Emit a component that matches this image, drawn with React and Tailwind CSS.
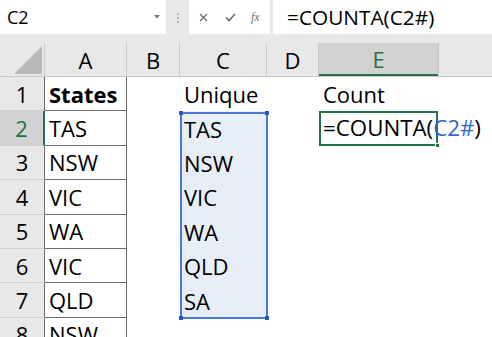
import React from "react";

const ROW_H = "h-[34.4px]";

function RowHeader({ n, active }) {
  return (
    <div
      className={
        "w-[45px] shrink-0 flex items-center justify-center border-b border-[#cfcfcf] " +
        (active
          ? "bg-[#d2d2d2] text-[#217346] border-r-2 border-r-[#217346]"
          : "bg-[#e8e8e8] text-black border-r border-r-[#6b6b6b]")
      }
    >
      {n}
    </div>
  );
}

const aVals = ["States", "TAS", "NSW", "VIC", "WA", "VIC", "QLD", "NSW"];
const cVals = ["Unique", "TAS", "NSW", "VIC", "WA", "QLD", "SA", ""];

export default function App() {
  return (
    <div
      className="relative w-[492px] h-[337px] overflow-hidden bg-white text-[22px] leading-none text-black"
      style={{ fontFamily: '"Open Sans", "Noto Sans", sans-serif' }}
    >
      {/* formula bar */}
      <div className="flex h-[35px] bg-[#e8e8e8]">
        <div className="w-[166px] h-[34px] bg-white flex items-center justify-between pl-[7px] pr-[6px]">
          <span className="text-[18px]">C2</span>
          <svg width="6" height="4" viewBox="0 0 6 4">
            <path d="M0 0 L6 0 L3 3.5 Z" fill="#777" />
          </svg>
        </div>
        <div className="w-[23px] flex flex-col items-center justify-center gap-[2px]">
          <div className="w-[2px] h-[2px] bg-[#b5b5b5]" />
          <div className="w-[2px] h-[2px] bg-[#b5b5b5]" />
          <div className="w-[2px] h-[2px] bg-[#b5b5b5]" />
        </div>
        <div className="w-[81px] h-[34px] bg-white flex items-center">
          <svg className="ml-[10px]" width="9" height="9" viewBox="0 0 9 9">
            <path d="M1 1 L8 8 M8 1 L1 8" stroke="#6d6d6d" strokeWidth="1.3" />
          </svg>
          <svg className="ml-[17px]" width="11" height="9" viewBox="0 0 11 9">
            <path d="M1 4.5 L4 7.5 L10 1" stroke="#6d6d6d" strokeWidth="1.6" fill="none" />
          </svg>
          <span
            className="ml-[15px] text-[12px] italic text-[#6d6d6d]"
            style={{ fontFamily: '"Liberation Serif", serif' }}
          >
            fx
          </span>
        </div>
        <div className="w-[3px]" />
        <div className="flex-1 h-[34px] bg-white flex items-center pl-[14px] text-[20.8px]">
          =COUNTA(C2#)
        </div>
      </div>
      <div className="h-[8px] bg-[#e8e8e8]" />

      {/* column headers */}
      <div className="flex h-[34px] bg-[#e8e8e8] border-b border-[#c8c8c8]">
        <div className="w-[45px] shrink-0 flex items-end justify-end pr-[2px] pb-[2px] border-r border-[#c8c8c8]">
          <svg width="28" height="28" viewBox="0 0 28 28">
            <path d="M28 0 L28 28 L0 28 Z" fill="#b8b8b8" />
          </svg>
        </div>
        <div className="w-[82px] shrink-0 flex items-center justify-center border-r border-[#c8c8c8]">A</div>
        <div className="w-[53px] shrink-0 flex items-center justify-center border-r border-[#c8c8c8]">B</div>
        <div className="w-[87px] shrink-0 flex items-center justify-center border-r border-[#c8c8c8]">C</div>
        <div className="w-[52px] shrink-0 flex items-center justify-center border-r border-[#c8c8c8]">D</div>
        <div className="w-[119px] shrink-0 flex items-center justify-center bg-[#d2d2d2] text-[#217346] border-b-2 border-[#217346]">E</div>
        <div className="flex-1 border-l border-[#c8c8c8]" />
      </div>

      {/* rows */}
      {aVals.map((a, i) => {
        const n = i + 1;
        const inSel = n >= 2 && n <= 7;
        return (
          <div key={n} className={"flex " + ROW_H}>
            <RowHeader n={n} active={n === 2} />
            <div
              className={
                "w-[82px] shrink-0 flex items-center pl-[4px] border-r border-b border-[#6b6b6b] " +
                (n === 1 ? "font-bold" : "")
              }
            >
              {a}
            </div>
            <div className="w-[53px] shrink-0" />
            <div
              className={
                "w-[87px] shrink-0 flex items-center pl-[4px] " + (inSel ? "bg-[#e8eef8]" : "")
              }
            >
              {cVals[i]}
            </div>
            <div className="w-[52px] shrink-0" />
            {n === 1 ? (
              <div className="w-[119px] shrink-0 flex items-center pl-[4px]">Count</div>
            ) : n === 2 ? (
              <div className="relative w-[119px] shrink-0 flex items-center pl-[2px] border-2 border-[#217346] whitespace-nowrap text-[22.3px]">
                <span>=COUNTA(</span>
                <span className="text-[#2f66cf]">C2#</span>
                <span>)</span>
                <span className="ml-[1px] w-[1px] h-[22px] bg-black" />
                <div className="absolute right-[-4px] bottom-[-4px] w-[5px] h-[5px] bg-[#217346] border border-white" />
              </div>
            ) : (
              <div className="w-[119px] shrink-0" />
            )}
            <div className="flex-1" />
          </div>
        );
      })}

      {/* spill range highlight */}
      <div className="absolute left-[180px] top-[112px] w-[88px] h-[207px] border-2 border-[#4a7bd8] pointer-events-none">
        <div className="absolute left-[-3px] top-[-3px] w-[4px] h-[4px] bg-[#2a58c0]" />
        <div className="absolute right-[-3px] top-[-3px] w-[4px] h-[4px] bg-[#2a58c0]" />
        <div className="absolute left-[-3px] bottom-[-3px] w-[4px] h-[4px] bg-[#2a58c0]" />
        <div className="absolute right-[-3px] bottom-[-3px] w-[4px] h-[4px] bg-[#2a58c0]" />
      </div>
    </div>
  );
}
